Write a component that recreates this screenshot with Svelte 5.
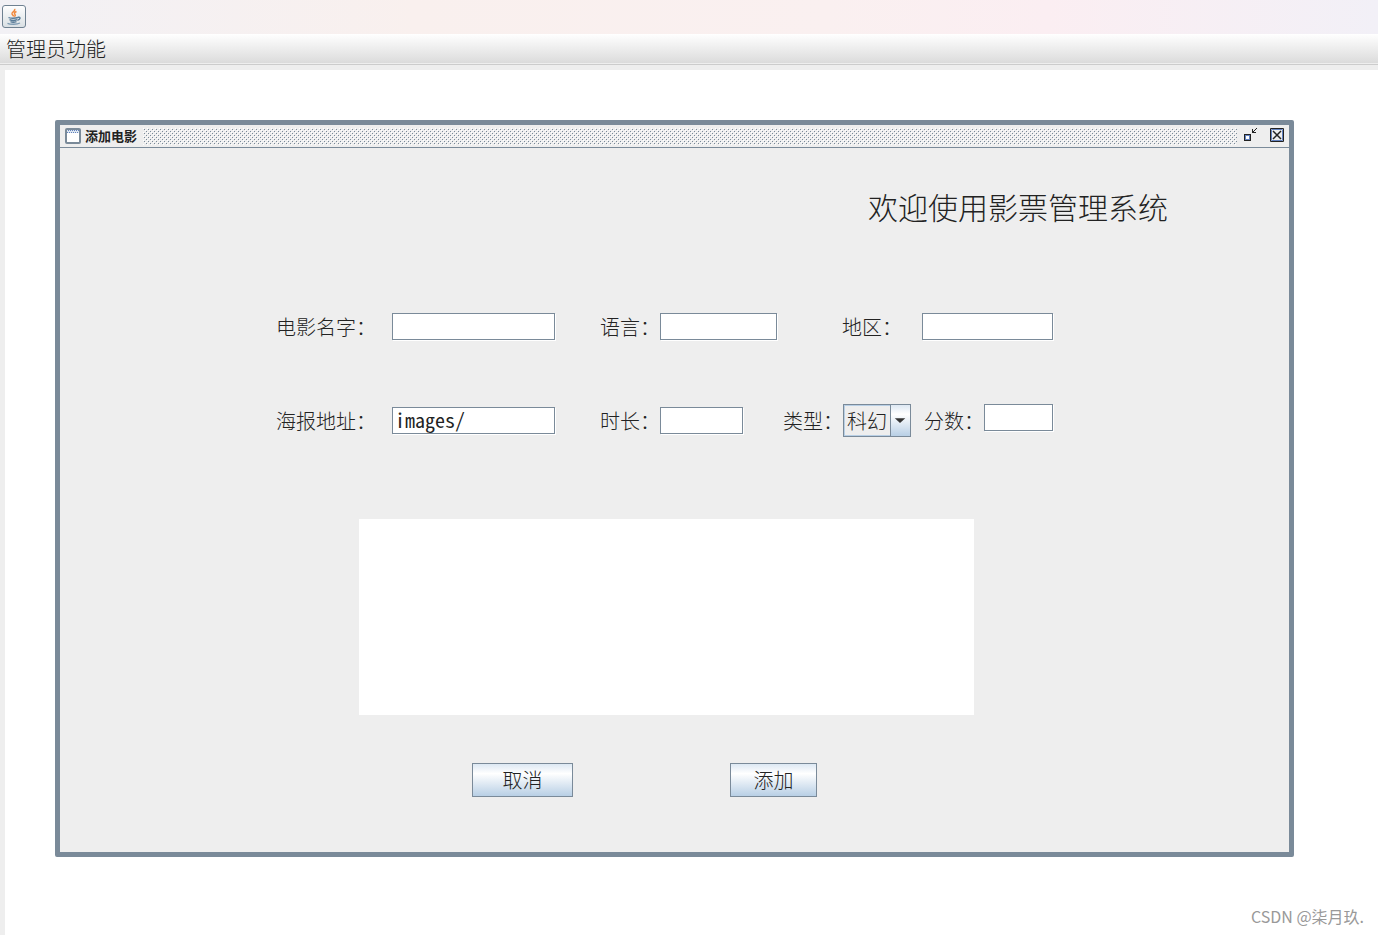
<script lang="ts">
    let movie = $state({
        name: "",
        language: "",
        region: "",
        poster: "images/",
        duration: "",
        type: "科幻",
        score: "",
        intro: ""
    });

    const types: string[] = ["科幻", "动作", "喜剧", "爱情", "悬疑"];
</script>

<div class="app">
    <header class="titlebar">
        <svg viewBox="0 0 24 24" width="24" height="24" aria-hidden="true">
            <defs>
                <linearGradient id="tile" x1="0" y1="0" x2="0" y2="1">
                    <stop offset="0" stop-color="#ffffff" />
                    <stop offset="1" stop-color="#d9dfe3" />
                </linearGradient>
            </defs>
            <rect x="0.5" y="0.5" width="23" height="22" rx="2.5" fill="url(#tile)" stroke="#6f8191" />
            <path d="M12.5 4c1.5 2-3.2 3-2.5 5 .4 1 1.500 1.500 1.500 2.500M14.500 6.500c-2 1-2.600 1.800-1.500 3 .6 1 0 1.800-.6 2.200" fill="none" stroke="#f0883c" stroke-width="1.500" />
            <path d="M6.500 12.500c1.500 1 7 .9 9.500 0M7.500 14.700c2 .9 5.500.9 7.500 0M8.500 16.700c1.500.7 4 .7 6 0M16 12.300c3-.6 2.500 2.300-.6 3" fill="none" stroke="#587b98" stroke-width="1.400" />
            <path d="M5.500 18.300c3 1.300 9.500 1.300 12.500-.3" fill="none" stroke="#7d9ab2" stroke-width="1.300" />
        </svg>
    </header>
    <nav class="menubar">
        <button type="button" class="menu">管理员功能</button>
    </nav>

    <main class="desktop">
        <section class="frame">
            <div class="caption">
                <svg width="16" height="16" viewBox="0 0 16 16" aria-hidden="true">
                    <rect x="1" y="1" width="14" height="14" rx="1" fill="#fff" stroke="#7a8a99" stroke-width="2" />
                    <path d="M2 2h12v3H2z" fill="#dce6f0" />
                    <path d="M3 2.500h11M2 4.500h12" stroke="#6382bf" stroke-dasharray="1 1" />
                </svg>
                <h2>添加电影</h2>
                <svg class="bumps" height="17" aria-hidden="true">
                    <defs>
                        <pattern id="bump" width="4" height="4" patternUnits="userSpaceOnUse">
                            <path d="M0 0h1v1H0zM2 2h1v1H2z" fill="#fff" />
                            <path d="M1 1h1v1H1zM3 3h1v1H3z" fill="#7a8a99" />
                        </pattern>
                    </defs>
                    <rect width="100%" height="17" fill="url(#bump)" />
                </svg>
                <button type="button" class="tool" aria-label="还原">
                    <svg width="16" height="16" viewBox="0 0 16 16" shape-rendering="crispEdges">
                        <path d="M1.500 6.500h6v6h-6z" fill="#fff" stroke="#222" />
                        <path d="M2.500 7.500h4v4h-4z" fill="none" stroke="#6382bf" />
                        <path d="M13 0h1v1h-1zM12 1h1v1h-1zM11 2h1v1h-1zM9 1h1v3h3v1H9zM10 3h1v1h-1z" fill="#222" />
                    </svg>
                </button>
                <button type="button" class="tool" aria-label="关闭">
                    <svg width="16" height="16" viewBox="0 0 16 16">
                        <path d="M1.500 0.500h13v13h-13z" fill="#fff" stroke="#222" />
                        <path d="M2.500 1.500h11v11h-11z" fill="#eee" stroke="#6382bf" />
                        <path d="M4 3l8 8M12 3l-8 8" stroke="#222" stroke-width="1.500" />
                    </svg>
                </button>
            </div>

            <form onsubmit={(e) => e.preventDefault()}>
                <h1>欢迎使用影票管理系统</h1>

                <div class="row">
                    <label class="field name">
                        <span>电影名字：</span>
                        <input type="text" bind:value={movie.name}>
                    </label>
                    <label class="field language">
                        <span>语言：</span>
                        <input type="text" bind:value={movie.language}>
                    </label>
                    <label class="field region">
                        <span>地区：</span>
                        <input type="text" bind:value={movie.region}>
                    </label>
                </div>

                <div class="row second">
                    <label class="field name">
                        <span>海报地址：</span>
                        <input type="text" bind:value={movie.poster}>
                    </label>
                    <label class="field duration">
                        <span>时长：</span>
                        <input type="text" bind:value={movie.duration}>
                    </label>
                    <label class="field type">
                        <span>类型：</span>
                        <span class="combo">
                            <select bind:value={movie.type}>
                                {#each types as type}
                                    <option>{type}</option>
                                {/each}
                            </select>
                            <svg width="20" height="31" viewBox="0 0 20 31" aria-hidden="true">
                                <path d="M4 13h11l-5.500 5z" fill="#333" />
                            </svg>
                        </span>
                    </label>
                    <label class="field score">
                        <span>分数：</span>
                        <input type="text" bind:value={movie.score}>
                    </label>
                </div>

                <textarea aria-label="电影简介" bind:value={movie.intro}></textarea>

                <div class="actions">
                    <button type="reset" class="cancel">取消</button>
                    <button type="submit" class="add">添加</button>
                </div>
            </form>
        </section>
        <p class="watermark">CSDN @柒月玖.</p>
    </main>
</div>

<style>
    :global(body) {
        margin: 0;
    }

    .app {
        min-height: 100vh;
        display: flex;
        flex-direction: column;
        background: #eee;
        color: #222;
        font: 300 20px/27px "Noto Sans CJK SC", sans-serif;
    }

    .app * {
        box-sizing: border-box;
    }

    .titlebar {
        display: flex;
        align-items: center;
        height: 34px;
        padding: 0 2px;
        background: linear-gradient(90deg, #f2f1f5, #f9f0ee 30%, #faf0f0 60%, #fbeef2 76%, #f2f0f7);
    }

    .menubar {
        display: flex;
        height: 31px;
        padding: 0 6px 2px;
        background: linear-gradient(#fff, #dadada);
        border-bottom: 1px solid #ccc;
        box-shadow: inset 0 -1px #eee;
    }

    button, input, select, textarea {
        margin: 0;
        padding: 0;
        border: 0;
        border-radius: 0;
        outline: none;
        color: inherit;
        font: inherit;
    }

    .menu {
        background: none;
    }

    .desktop {
        flex: 1;
        display: flex;
        flex-direction: column;
        justify-content: space-between;
        margin: 5px 0 0 5px;
        padding: 50px 84px 0 50px;
        background: #fff;
    }

    .frame {
        border: 5px solid #7a8a99;
        border-radius: 2px;
        background: #eee;
    }

    .caption {
        display: flex;
        align-items: center;
        height: 23px;
        padding: 0 4px 0 5px;
        border-bottom: 1px solid #7a8a99;
    }

    h2 {
        margin: 0 6px 0 4px;
        font-size: 13px;
        line-height: 20px;
        font-weight: bold;
    }

    .bumps {
        flex: 1;
        min-width: 0;
    }

    .tool {
        display: flex;
        margin-left: 6px;
        background: none;
    }

    .tool + .tool {
        margin-left: 10px;
    }

    form {
        padding: 38px 121px 55px 216px;
    }

    h1 {
        margin: 0 0 87px;
        text-align: right;
        font-size: 30px;
        line-height: 40px;
        font-weight: 300;
    }

    .row {
        display: flex;
        margin-right: 115px;
    }

    .second {
        align-items: center;
        margin-top: 64px;
    }

    .field {
        display: flex;
        align-items: center;
        white-space: nowrap;
    }

    .field input {
        flex: 1;
        width: 100%;
        min-width: 0;
        height: 27px;
        padding: 0 2px 2px;
        background: #fff;
        border: 1px solid #7a8a99;
        box-shadow: 1px 1px #fff;
        font-feature-settings: "hwid";
        font-weight: 400;
    }

    .name {
        flex: 279 1 0;
        gap: 16px;
    }

    .language {
        flex: 177 1 0;
        margin-left: 45px;
    }

    .region {
        flex: 211 1 0;
        gap: 20px;
        margin-left: 65px;
    }

    .duration {
        flex: 143 1 0;
        margin-left: 45px;
    }

    .type {
        flex: none;
        margin-left: 40px;
    }

    .score {
        flex: 129 1 0;
        align-self: stretch;
        margin-left: 13px;
    }

    .score input {
        align-self: flex-start;
    }

    .combo {
        display: grid;
        border: 1px solid #7a8a99;
        height: 33px;
    }

    .combo select, .combo svg {
        grid-area: 1 / 1;
    }

    .combo select {
        appearance: none;
        width: 66px;
        padding-left: 3px;
        background: #eee;
        box-shadow: inset 0 0 0 1px #b8cfe5;
    }

    .combo svg {
        justify-self: end;
        border-left: 1px solid #7a8a99;
        background: linear-gradient(#dde8f3, #fff 30%, #b8cfe5);
        pointer-events: none;
    }

    textarea {
        display: block;
        width: calc(100% - 277px);
        height: 196px;
        margin: 82px 0 48px 83px;
        resize: none;
        background: #fff;
    }

    .actions {
        display: flex;
        gap: 157px;
        margin-left: 196px;
    }

    .actions button {
        height: 34px;
        padding-bottom: 2px;
        border: 1px solid #7a8a99;
        background: linear-gradient(#dde8f3, #fff 30%, #b8cfe5);
    }

    .cancel {
        width: 101px;
    }

    .add {
        width: 87px;
    }

    .watermark {
        margin: 0 -70px 5px 0;
        text-align: right;
        color: #999;
        font-size: 16px;
        font-weight: 400;
    }
</style>
